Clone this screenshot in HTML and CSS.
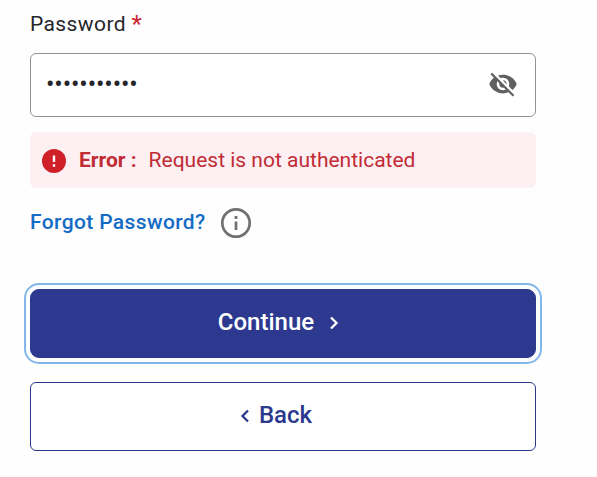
FILE: index.html
```html
<!DOCTYPE html>
<html lang="en">
<head>
<meta charset="utf-8">
<title>Sign in</title>
<link rel="stylesheet" href="styles.css">
</head>
<body>
<form class="login">
  <div class="label">Password <span class="required">*</span></div>
  <div class="field">
    <span class="dots">•••••••••••</span>
    <svg class="eye" viewBox="0 0 24 24"><path d="M12 7c2.760 0 5 2.240 5 5 0 .65-.13 1.260-.36 1.830l2.920 2.920c1.510-1.260 2.700-2.890 3.430-4.750-1.730-4.390-6-7.500-11-7.500-1.400 0-2.740.25-3.980.7l2.160 2.160C10.740 7.130 11.350 7 12 7zM2 4.270l2.280 2.280.46.46C3.080 8.300 1.780 10.020 1 12c1.730 4.390 6 7.500 11 7.500 1.550 0 3.030-.3 4.380-.84l.42.42L19.730 22 21 20.730 3.270 3 2 4.270zM7.530 9.800l1.550 1.550c-.05.21-.08.43-.08.65 0 1.660 1.340 3 3 3 .22 0 .44-.03.65-.08l1.550 1.550c-.67.33-1.410.53-2.200.53-2.760 0-5-2.240-5-5 0-.79.2-1.530.53-2.200zm4.310-.78l3.150 3.150.02-.16c0-1.660-1.340-3-3-3l-.17.01z"/></svg>
  </div>
  <div class="alert">
    <svg class="alert-icon" viewBox="0 0 24 24"><circle cx="12" cy="12" r="12"/><path d="M12 6.500v6.500M12 15.300v2.400"/></svg>
    <strong class="alert-title">Error :</strong>
    <span class="alert-text">Request is not authenticated</span>
  </div>
  <div class="forgot">
    <a class="link">Forgot Password?</a>
    <svg class="info" viewBox="0 0 32 32"><circle cx="16" cy="16" r="13.700"/><path d="M16 14.500v8.500M16 9v3"/></svg>
  </div>
  <button type="button" class="button primary"><span>Continue</span><svg class="chevron" viewBox="0 0 10 14"><path d="M2 1.500L7.500 7L2 12.500"/></svg></button>
  <button type="button" class="button secondary"><svg class="chevron" viewBox="0 0 10 14"><path d="M8 1.500L2.500 7L8 12.500"/></svg><span>Back</span></button>
</form>
</body>
</html>
```
FILE: styles.css
```css
* { box-sizing: border-box; }
body {
  margin: 0;
  background: #fefefe;
  color: #24262b;
  font-family: Roboto, "Liberation Sans", sans-serif;
}
.login {
  width: 506px;
  margin-left: 30px;
  padding-top: 9px;
  display: flex;
  flex-direction: column;
}
.label {
  height: 44px;
  font-size: 21px;
  line-height: 30px;
  letter-spacing: 0.4px;
}
.required { color: #cb2431; font-size: 24px; line-height: 20px; vertical-align: -1px; }
.field {
  height: 64px;
  padding: 0 17px 0 15px;
  display: flex;
  align-items: center;
  justify-content: space-between;
  border: 1px solid #929297;
  border-radius: 6px;
  background: #fff;
}
.dots { font-size: 25px; line-height: 24px; letter-spacing: -0.1px; margin-bottom: 1px; }
.eye { width: 30px; height: 30px; margin-bottom: 2px; fill: #606063; }
.alert {
  height: 56px;
  margin-top: 15px;
  padding-left: 12px;
  display: flex;
  align-items: center;
  border-radius: 6px;
  background: #fdf0f3;
  color: #c12b34;
  font-size: 21px;
  line-height: 28px;
}
.alert-icon { width: 24px; height: 24px; margin: 2px 13px 0 0; fill: #d02027; stroke: #fff; stroke-width: 2.4; }
.alert-icon circle { stroke: none; }
.alert-title { font-weight: 700; margin-right: 12px; }
.forgot {
  height: 34px;
  margin-top: 17px;
  display: flex;
  align-items: center;
  gap: 14px;
}
.link { color: #136bc5; font-size: 21px; line-height: 28px; font-weight: 500; letter-spacing: 0.38px; }
.info { width: 32px; height: 32px; margin-top: 2px; fill: none; stroke: #707070; stroke-width: 2.7; }
.button {
  height: 69px;
  display: flex;
  align-items: center;
  justify-content: center;
  border: 1px solid #2b398d;
  font-family: inherit;
  font-size: 24px;
  font-weight: 500;
  line-height: 32px;
}
.primary {
  margin-top: 50px;
  padding: 0 9px 4px 0;
  gap: 15px;
  border-radius: 9px;
  background: #2c398e;
  color: #fff;
  outline: 2px solid #83b7ea;
  outline-offset: 4px;
}
.secondary {
  margin-top: 24px;
  padding: 0 14px 4px 0;
  gap: 9px;
  border-radius: 6px;
  background: #fff;
  color: #2c398e;
}
.chevron { width: 10px; height: 14px; fill: none; stroke: currentColor; stroke-width: 2.3; margin-top: 2px; }
```
